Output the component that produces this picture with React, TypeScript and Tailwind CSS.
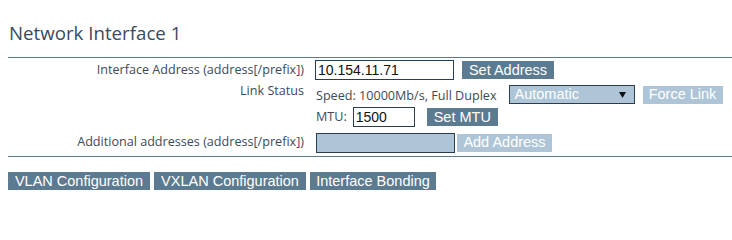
import React from 'react';

const label = "font-['Open_Sans','Noto_Sans',sans-serif] text-[12.6px] text-[#3c4a5c]";
const btn = "flex items-center justify-center h-[18px] bg-[#5d7b90] text-white text-[14.5px] font-['Liberation_Sans',Arial,sans-serif] leading-none";
const btnOff = "flex items-center justify-center h-[18px] bg-[#adc5d6] text-white text-[14.5px] font-['Liberation_Sans',Arial,sans-serif] leading-none";
const field = "h-[20px] border border-[#2a3d4f] px-[2px] text-[14px] text-[#111] font-['Liberation_Sans',Arial,sans-serif] leading-none outline-none";

export default function App() {
  return (
    <div className="w-[732px] h-[201px] bg-white pl-[8px] overflow-hidden">
      <div className="h-[57px] pt-[21px]">
        <h2 className="pl-[1px] font-['Open_Sans','Noto_Sans',sans-serif] text-[18.7px] leading-[24px] text-[#3a4a5e]">
          Network Interface 1
        </h2>
      </div>
      <div className="border-t border-[#5d7b90]" />

      <div className="grid grid-cols-[296px_1fr] gap-x-[12px]">
        {/* interface address */}
        <div className={`${label} mt-[1px] h-[22px] flex items-center justify-end`}>
          Interface Address (address[/prefix])
        </div>
        <div className="mt-[1px] h-[22px] flex items-center">
          <input className={`${field} bg-white w-[139px] -ml-[1px]`} defaultValue="10.154.11.71" />
          <button className={`${btn} ml-[8px] w-[92px]`}>Set Address</button>
        </div>

        {/* link status */}
        <div className={`${label} mt-[3px] leading-[14px] text-right`}>Link Status</div>
        <div className="mt-[3px] flex flex-col">
          <div className="h-[21px] flex items-center">
            <span className={`${label} leading-[14px] pt-[3px]`}>Speed: 10000Mb/s, Full Duplex</span>
            <div className="ml-[12px] w-[126px] h-[19px] border border-[#2a3d4f] bg-[#adc5d6] flex items-center justify-between pl-[5px] pr-[8px]">
              <span className="text-white text-[14.5px] font-['Liberation_Sans',Arial,sans-serif] leading-none">Automatic</span>
              <svg width="7" height="6" viewBox="0 0 7 6">
                <path d="M0 0 H7 L3.5 6 Z" fill="#111" />
              </svg>
            </div>
            <button className={`${btnOff} ml-[8px] w-[80px]`}>Force Link</button>
          </div>
          <div className="mt-[1px] h-[22px] flex items-center">
            <span className={`${label} leading-[14px]`}>MTU:</span>
            <input className={`${field} bg-white ml-[6px] w-[62px]`} defaultValue="1500" />
            <button className={`${btn} ml-[12px] w-[71px]`}>Set MTU</button>
          </div>
        </div>

        {/* additional addresses */}
        <div className={`${label} mt-[4px] h-[21px] flex items-center justify-end`}>
          Additional addresses (address[/prefix])
        </div>
        <div className="mt-[4px] h-[21px] flex items-center">
          <input disabled className={`${field} bg-[#adc5d6] w-[139px]`} />
          <button className={`${btnOff} ml-[2px] w-[95px]`}>Add Address</button>
        </div>
      </div>

      <div className="mt-[3px] border-t border-[#5d7b90]" />

      <div className="mt-[15px] flex gap-[4px]">
        <button className={`${btn} w-[142px]`}>VLAN Configuration</button>
        <button className={`${btn} w-[152px]`}>VXLAN Configuration</button>
        <button className={`${btn} w-[126px]`}>Interface Bonding</button>
      </div>
    </div>
  );
}
